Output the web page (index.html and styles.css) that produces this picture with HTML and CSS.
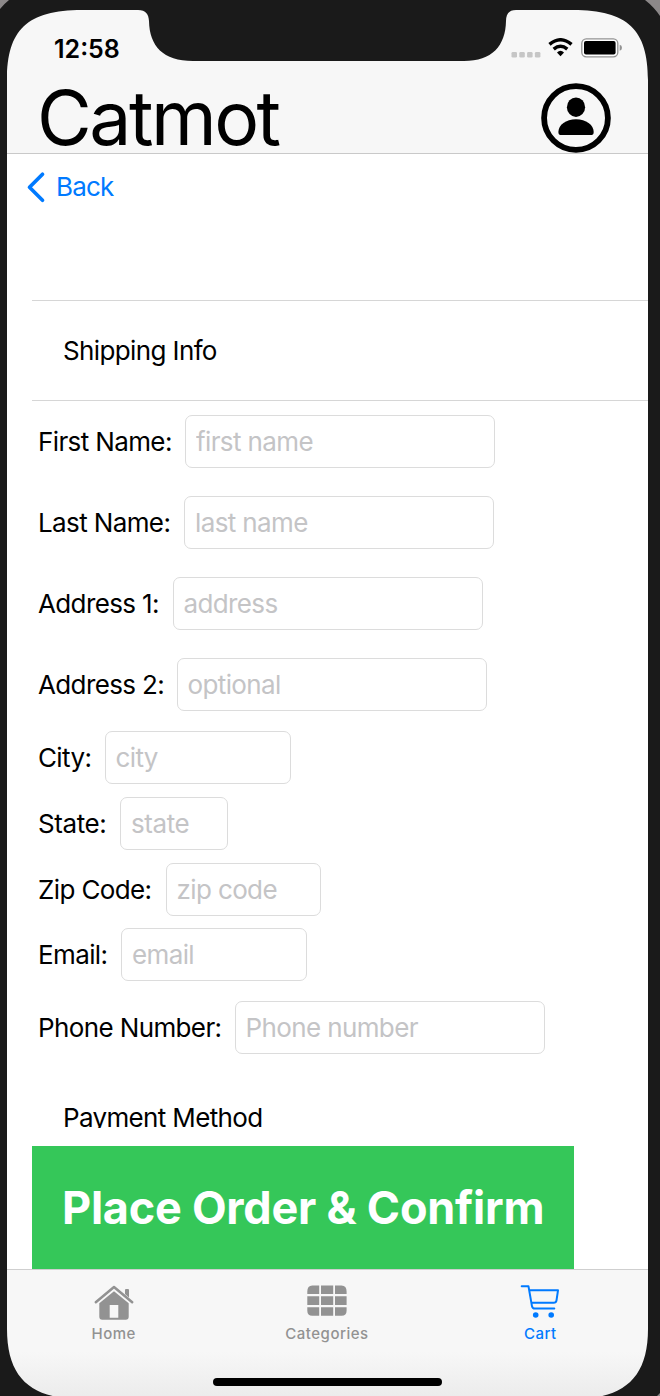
FILE: index.html
```html
<!DOCTYPE html>
<html lang="en">
<head>
<meta charset="utf-8">
<title>Catmot</title>
<link rel="stylesheet" href="styles.css">
</head>
<body>
<div class="device">
  <div class="screen">
    <header class="header">
      <div class="status">
        <span class="time">12:58</span>
        <div class="indicators">
          <svg width="30" height="8" viewBox="0 0 30 8" fill="#c6c6c6"><rect x=".5" y="1" width="5.5" height="5.5" rx="1.3"/><rect x="8.3" y="1" width="5.5" height="5.5" rx="1.3"/><rect x="16.1" y="1" width="5.5" height="5.5" rx="1.3"/><rect x="23.9" y="1" width="5.5" height="5.5" rx="1.3"/></svg>
          <svg class="wifi" width="25" height="19" viewBox="0 0 25 19"><path d="M1.5 6.4Q12.5 -2.8 23.5 6.4M5.7 11.1Q12.5 5.4 19.3 11.1" fill="none" stroke="#000" stroke-width="3.5"/><path d="M9 14.4Q12.5 11.2 16 14.4L12.5 18.2Z"/></svg>
          <svg class="battery" width="42" height="20" viewBox="0 0 42 20"><rect x=".8" y=".8" width="36" height="18" rx="4.5" fill="#fff" stroke="#929292" stroke-width="1.3"/><rect x="3" y="3" width="31.6" height="13.6" rx="2"/><path d="M38.7 6.8Q41 7.5 41 9.8T38.7 12.8Z" fill="#929292"/></svg>
        </div>
      </div>
      <div class="brand">
        <h1>Catmot</h1>
        <svg width="70" height="70" viewBox="0 0 70 70"><circle cx="35" cy="35" r="31.9" fill="none" stroke="#000" stroke-width="5.8"/><ellipse cx="35" cy="24.2" rx="9.1" ry="9.7"/><path d="M17.4 49C17.4 42 25 36.300 35 36.300S52.700 42 52.700 49Q52.700 52 50.500 52H19.500Q17.400 52 17.400 49Z"/></svg>
      </div>
    </header>
    <nav class="back">
      <svg width="20" height="32" viewBox="0 0 20 32"><path d="M16.500 3.200 3.500 16.300 16.500 29.200" fill="none" stroke="#007aff" stroke-width="3.7" stroke-linecap="round" stroke-linejoin="round"/></svg>
      <span>Back</span>
    </nav>
    <main class="content">
      <h2 class="section">Shipping Info</h2>
      <form class="form">
        <div class="field first"><label>First Name:</label><input placeholder="first name"></div>
        <div class="field last"><label>Last Name:</label><input placeholder="last name"></div>
        <div class="field addr1"><label>Address 1:</label><input placeholder="address"></div>
        <div class="field addr2"><label>Address 2:</label><input placeholder="optional"></div>
        <div class="field city"><label>City:</label><input placeholder="city"></div>
        <div class="field state"><label>State:</label><input placeholder="state"></div>
        <div class="field zip"><label>Zip Code:</label><input placeholder="zip code"></div>
        <div class="field email"><label>Email:</label><input placeholder="email"></div>
        <div class="field phone"><label>Phone Number:</label><input placeholder="Phone number"></div>
      </form>
      <h2 class="payment">Payment Method</h2>
      <button class="confirm"><span>Place Order &amp; Confirm</span></button>
    </main>
    <footer class="tabs">
      <a class="tab home">
        <svg width="40" height="38" viewBox="0 0 40 38"><path d="M1.800 19.200 20 4 38.200 19.200" fill="none" stroke="#929292" stroke-width="2.500" stroke-linecap="round" stroke-linejoin="round"/><path fill="#929292" fill-rule="evenodd" d="M5.300 20.200 20 8.200 34.700 20.200V33.800Q34.700 36.800 31.700 36.800H8.300Q5.300 36.800 5.300 33.800ZM15.700 22H24.300V34.800H15.700ZM31 7Q31 6 32 6H34Q35 6 35 7V14.400L31 11Z"/></svg>
        <span>Home</span>
      </a>
      <a class="tab categories">
        <svg width="40" height="38" viewBox="0 0 40 38" fill="#929292"><path d="M.3 8.400Q.3 2.400 5.300 2.400H12.200V11H.3ZM14 2.400H26.200V11H14ZM28 2.400H34.500Q39.600 2.400 39.600 8.400V11H28ZM.3 13.300H12.200V22H.3ZM14 13.300H26.200V22H14ZM28 13.300H39.600V22H28ZM.3 24.300H12.200V32.800H5.300Q.3 32.800 .3 27.800ZM14 24.300H26.200V32.800H14ZM28 24.300H39.600V27.800Q39.600 32.800 34.500 32.800H28Z"/></svg>
        <span>Categories</span>
      </a>
      <a class="tab cart">
        <svg width="40" height="38" viewBox="0 0 40 38"><path d="M1.700 3.300H8.500L12 23.300Q12.500 25.600 14.800 25.600H34.300M9.400 7.300H38L36.500 17.400Q36.100 19.800 33.600 19.800H11.500" fill="none" stroke="#007aff" stroke-width="2" stroke-linecap="round" stroke-linejoin="round"/><circle cx="15.700" cy="32" r="2.800" fill="#007aff"/><circle cx="31.200" cy="32" r="2.800" fill="#007aff"/></svg>
        <span>Cart</span>
      </a>
    </footer>
  </div>
  <svg class="bezel" width="660" height="1396" viewBox="0 0 660 1396">
    <path fill="#1a1a1a" fill-rule="evenodd" d="M0 0H660V1396H0ZM7 80C7 30 27 10 82 10H138C146 10 148.500 14 149 21C149.500 46 163 61 193 61H464C492 61 505.500 46 506 21C506 14 509 10 516 10H573C628 10 648 30 648 80V1329C648 1379 623 1399 573 1399H82C32 1399 7 1379 7 1329Z"/>
    <path fill="#8c8889" d="M0 0H9Q4 4 0 9ZM645 0Q654 7 660 16V0ZM660 1393V1396H657Z"/>
    <path d="M217 1382H438" stroke="#000" stroke-width="8" stroke-linecap="round"/>
  </svg>
</div>
</body>
</html>
```

FILE: styles.css
```css
* { box-sizing: border-box; }
body { margin: 0; font-family: Inter, "Liberation Sans", sans-serif; color: #000; }
svg { display: block; flex: none; }
h1, h2 { margin: 0; font-weight: 400; }
.device { position: relative; width: 660px; height: 1396px; overflow: hidden; background: #1a1a1a; padding: 10px 12px 0 7px; }
.bezel { position: absolute; left: 0; top: 0; pointer-events: none; }
.screen { height: 1386px; background: #fff; display: flex; flex-direction: column; }

.header { height: 144px; flex: none; background: #f7f7f7; border-bottom: 1px solid #c9c9c9; }
.status { height: 73px; padding: 0 25px 0 47px; display: flex; justify-content: space-between; }
.time { font-size: 25px; line-height: 30px; font-weight: 600; margin-top: 24px; letter-spacing: 0; }
.indicators { display: flex; align-items: flex-start; padding-top: 28px; }
.indicators > svg:first-child { margin-top: 13px; }
.wifi { margin: 0 8px 0 7px; }
.brand { display: flex; justify-content: space-between; padding: 0 37px 0 30px; height: 70px; }
.brand h1 { font-size: 75px; line-height: 70px; letter-spacing: -2.500px; white-space: nowrap; }

.back { display: flex; align-items: center; gap: 10px; flex: none; height: 66px; padding-left: 19px; color: #007aff; font-size: 26px; letter-spacing: -.8px; }
.back span { margin-top: -2px; }

.content { flex: none; height: 1049px; margin-left: 25px; padding-top: 80px; display: flex; flex-direction: column; }
.section { height: 101px; flex: none; border-top: 1px solid #d6d6d6; border-bottom: 1px solid #d6d6d6; padding-left: 31px; font-size: 26px; line-height: 99px; letter-spacing: -.62px; }
.form { padding: 14px 0 0 6px; font-size: 26px; letter-spacing: -.62px; flex: none; }
.field { display: flex; height: 53px; margin-bottom: 28px; }
.field label { flex: none; line-height: 53px; white-space: nowrap; }
.field input { width: 310px; height: 53px; padding: 0 10px; border: 1px solid #dcdcdc; border-radius: 7px; background: #fff; font: inherit; letter-spacing: inherit; }
.field input::placeholder { color: #c4c4c6; opacity: 1; }
.first label { width: 147px; }
.last label { width: 146px; }
.addr1 label { width: 134.500px; }
.addr2 label { width: 138.500px; }
.addr2 { margin-bottom: 20px; }
.city label { width: 66.500px; }
.city input, .email input { width: 186px; }
.city, .state { margin-bottom: 13px; }
.state { letter-spacing: -.4px; }
.state label { width: 82px; }
.state input { width: 108px; }
.zip label { width: 127.500px; }
.zip input { width: 155px; }
.zip { margin-bottom: 12px; }
.email label { width: 83px; }
.email { margin-bottom: 20px; }
.phone label { width: 196.500px; }
.phone { margin-bottom: 0; }
.payment { flex: none; margin-top: 48px; padding-left: 31px; height: 26px; line-height: 31px; font-size: 26px; overflow: hidden; letter-spacing: -.65px; }
.confirm { flex: none; width: 542px; height: 123px; margin-top: 18px; border: 0; padding: 0 0 0 30px; background: #35c759; color: #fff; text-align: left; font: 700 45px/123px Inter, sans-serif; letter-spacing: -.25px; white-space: nowrap; }

.tabs { flex: 1; border-top: 1px solid #cfcfcf; background: linear-gradient(#f7f7f7 65%, #ececec); display: grid; grid-template-columns: repeat(3, 1fr); padding: 13px 1px 0 0; }
.tab { display: flex; flex-direction: column; align-items: center; color: #929292; font-size: 15px; line-height: 20px; font-weight: 500; letter-spacing: .5px; }
.tab span { margin-top: 3px; }
.tab.cart { color: #007aff; }
```
